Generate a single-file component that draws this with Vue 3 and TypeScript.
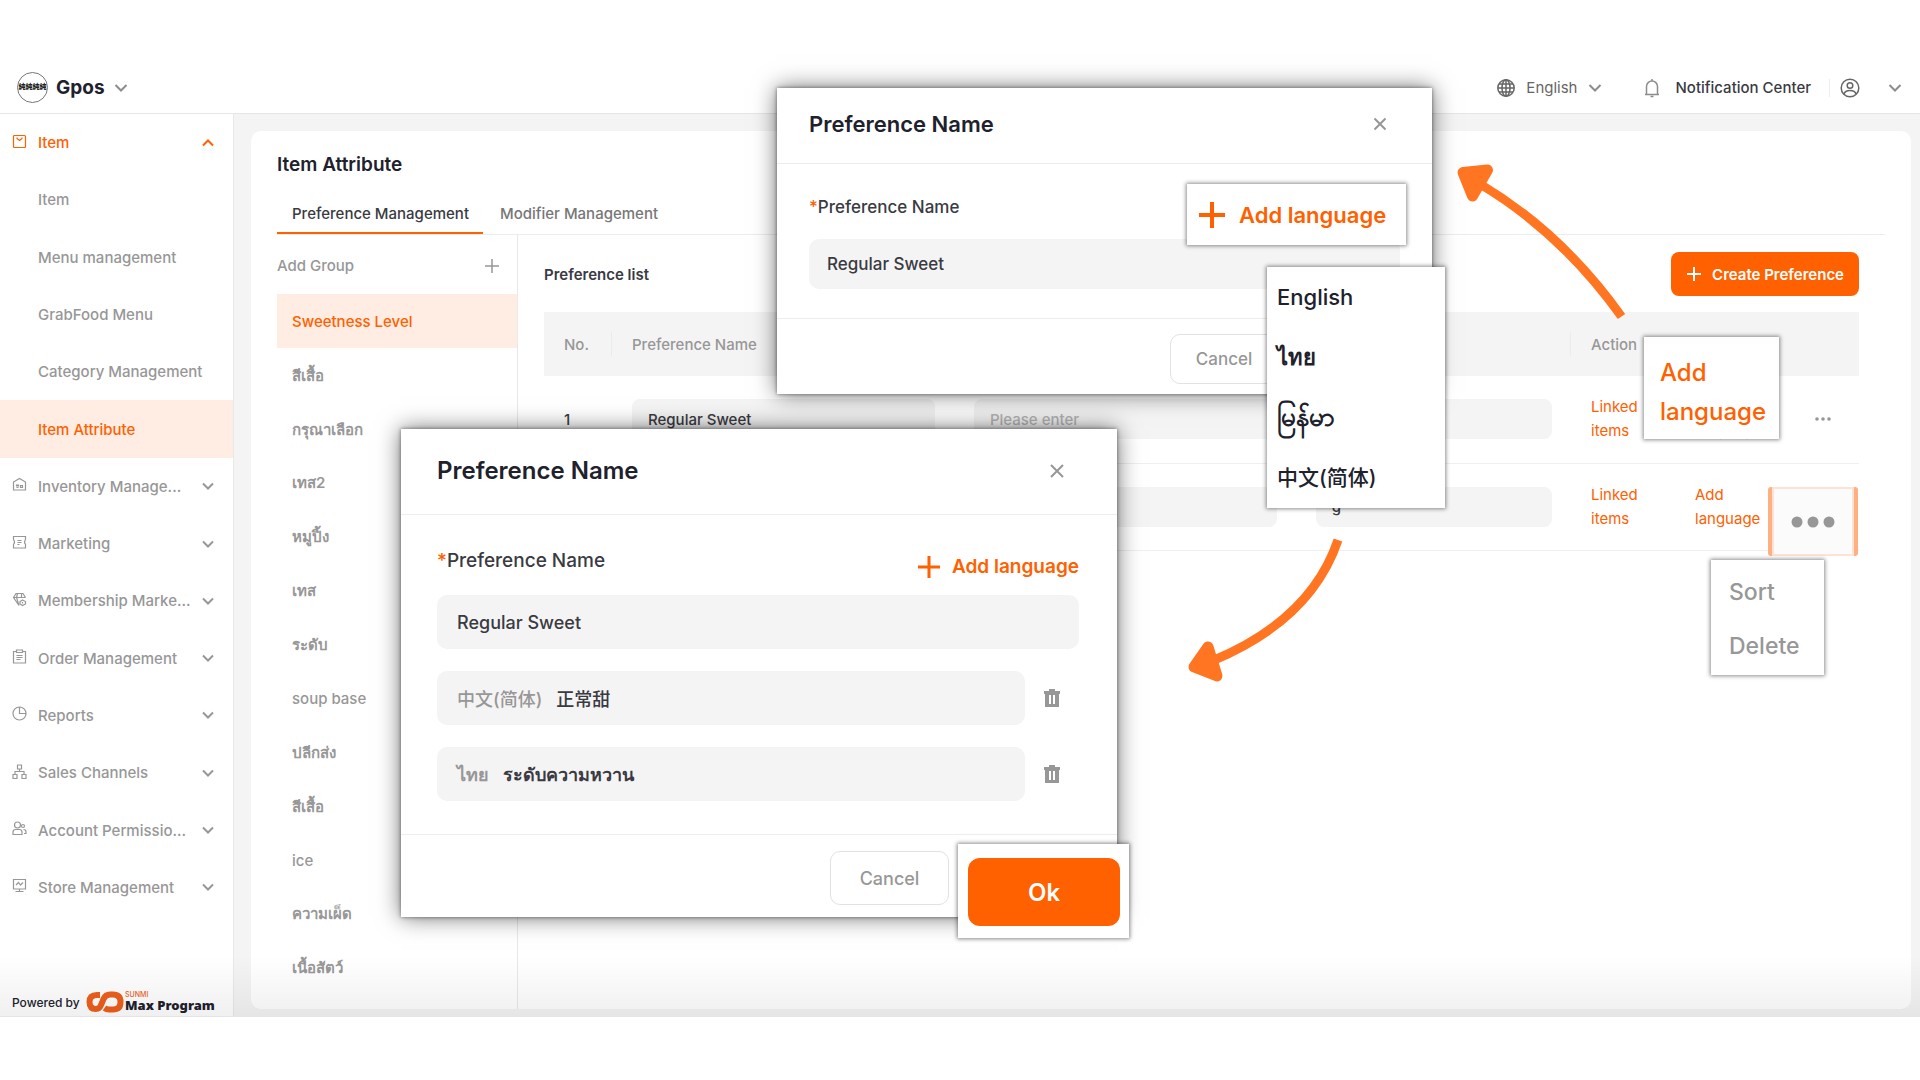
<script setup lang="ts">
import { ref } from 'vue'

interface MenuEntry {
  label: string
  icon?: string
  active?: boolean
}

interface PreferenceRow {
  no: number
  name: string
  second: string
  third: string
}

const submenu: MenuEntry[] = [
  { label: 'Item' },
  { label: 'Menu management' },
  { label: 'GrabFood Menu' },
  { label: 'Category Management' },
  { label: 'Item Attribute', active: true },
]

const sections: MenuEntry[] = [
  {
    label: 'Inventory Manage...',
    icon: 'M1.500 13V5L7.500 1.500L13.500 5V13ZM4.500 8H6.500V9H4.500ZM4.500 10.500H6.500M8.500 8.500H10.500V10.500H8.500Z',
  },
  {
    label: 'Marketing',
    icon: 'M1.500 1.500H13.500V4.500Q11.500 7 13.500 9.500V13H1.500V9.500Q3.500 7 1.500 4.500ZM5.500 5.500H9.500M5.500 7.500H9.500M5.500 9.500H7.500',
  },
  {
    label: 'Membership Marke...',
    icon: 'M7 13.500L1.500 5.500L4 1.500H11L13.500 5.500M1.500 5.500H13.500M5.500 1.500L4.500 5.500L7 13.500M9.500 1.500V5.500M10.500 8L13.500 9.500V12L10.500 13.500L8 12V9.500ZM10.500 10V11.500',
  },
  {
    label: 'Order Management',
    icon: 'M4.500 2.500H1.500V14H13.500V2.500H10.500M4.500 1H10.500V3.500H4.500ZM4.500 6.500H10.500M4.500 8.500H10.500M4.500 10.500H8.500',
  },
  { label: 'Reports', icon: 'M14 7.500A6.500 6.500 0 1 1 7.500 1A6.500 6.500 0 0 1 14 7.500ZM7.500 1V7.500H14' },
  {
    label: 'Sales Channels',
    icon: 'M5.500 1H9.500V5H5.500ZM1 10.500H5V14.500H1ZM10 10.500H14V14.500H10ZM7.500 5V7.500M3 10.500V7.500H12V10.500',
  },
  {
    label: 'Account Permissio...',
    icon: 'M8.500 4A3 3 0 1 1 2.500 4A3 3 0 1 1 8.500 4ZM1 13.500V11Q1 8.500 3.500 8.500H7.500Q10 8.500 10 11V13.500ZM11 3.500A1.500 1.500 0 1 1 11 6.500A1.500 1.500 0 1 1 11 3.500M11.500 8.500Q14 8.500 14 11V12.500H12',
  },
  {
    label: 'Store Management',
    icon: 'M1.500 1.500H13.500V11H1.500ZM4 7L6.500 4.500L8.500 7L11 4.500M7.500 11V13.500M3.500 13.500H11.500',
  },
]

const groups = [
  'Sweetness Level', 'สีเสื้อ', 'กรุณาเลือก', 'เทส2', 'หมูปิ้ง', 'เทส', 'ระดับ',
  'soup base', 'ปลีกส่ง', 'สีเสื้อ', 'ice', 'ความเผ็ด', 'เนื้อสัตว์',
]
const activeGroup = ref(0)
const isThai = (text: string) => /[\u0e00-\u0e7f]/.test(text)

const rows = ref<PreferenceRow[]>([
  { no: 1, name: 'Regular Sweet', second: '', third: '' },
  { no: 2, name: '', second: '', third: 'g' },
])

const languages = [
  { code: 'en', label: 'English' },
  { code: 'th', label: 'ไทย' },
  { code: 'my', label: 'မြန်မာ' },
  { code: 'zh', label: '中文(简体)' },
]
const preferenceName = ref('Regular Sweet')
const translations = ref([
  { id: 'zh', language: '中文(简体)', value: '正常甜' },
  { id: 'th', language: 'ไทย', value: 'ระดับความหวาน' },
])
</script>

<template>
  <div class="page">
    <header class="topbar">
      <button class="brand" type="button">
        <span class="brand-logo">純純純純</span>
        <span class="brand-name">Gpos</span>
        <svg class="chevron" width="14" height="10" viewBox="0 0 14 10"><path d="M1.500 2L7 7.500L12.500 2" /></svg>
      </button>
      <div class="tools">
        <button class="tool language" type="button">
          <svg class="line-icon dark" width="20" height="20" viewBox="0 0 20 20">
            <circle cx="10" cy="10" r="8.200" />
            <ellipse cx="10" cy="10" rx="4" ry="8.200" />
            <path d="M10 2V18M2 10H18M3 6H17M3 14H17" />
          </svg>
          <span>English</span>
          <svg class="chevron" width="14" height="10" viewBox="0 0 14 10"><path d="M1.500 2L7 7.500L12.500 2" /></svg>
        </button>
        <button class="tool notice" type="button">
          <svg class="line-icon" width="18" height="20" viewBox="0 0 18 20">
            <path d="M2 16.500H16M3.500 16.500V8.500A5.500 5.500 0 0 1 14.500 8.500V16.500M9 3V1M7.500 18.500H10.500" />
          </svg>
          <span>Notification Center</span>
        </button>
        <button class="tool account" type="button" aria-label="Account">
          <svg class="line-icon dark" width="20" height="20" viewBox="0 0 20 20">
            <circle cx="10" cy="10" r="8.800" />
            <circle cx="10" cy="7.500" r="2.800" />
            <path d="M4 16Q5 12.500 10 12.500Q15 12.500 16 16" />
          </svg>
          <svg class="chevron" width="14" height="10" viewBox="0 0 14 10"><path d="M1.500 2L7 7.500L12.500 2" /></svg>
        </button>
      </div>
    </header>

    <div class="body">
      <aside class="sidebar">
        <nav class="nav">
          <button class="nav-row open" type="button">
            <svg class="nav-icon" width="15" height="15" viewBox="0 0 15 15">
              <rect x="1.500" y="1.500" width="12" height="12" rx="1" />
              <path d="M5 3.500V4.500L7.500 6.500L10 4.500V3.500" />
            </svg>
            <span>Item</span>
            <svg class="nav-chevron" width="12" height="10" viewBox="0 0 12 10"><path d="M1 7.500L6 2.500L11 7.500" /></svg>
          </button>
          <a v-for="entry in submenu" :key="entry.label" class="nav-row sub" :class="{ active: entry.active }" href="#">{{ entry.label }}</a>
          <button v-for="entry in sections" :key="entry.label" class="nav-row" type="button">
            <svg class="nav-icon" width="15" height="15" viewBox="0 0 15 15"><path :d="entry.icon" /></svg>
            <span>{{ entry.label }}</span>
            <svg class="nav-chevron" width="12" height="10" viewBox="0 0 12 10"><path d="M1 2.500L6 7.500L11 2.500" /></svg>
          </button>
        </nav>
        <footer class="powered">
          <span class="powered-by">Powered by</span>
          <svg width="38" height="22" viewBox="0 0 38 22">
            <path d="M14 4H11Q3.500 4 3.500 11Q3.500 18 10 18Q13.500 18 15 14L17.500 8Q19.500 3.500 24 3.500H27Q34.500 3.500 34.500 11Q34.500 18.500 27 18.500H23Q20.500 18.500 18.500 17" />
          </svg>
          <span class="program">
            <span class="program-brand">SUNMI</span>
            <span class="program-name">Max Program</span>
          </span>
        </footer>
      </aside>

      <main class="main">
        <section class="card">
          <h1>Item Attribute</h1>
          <div class="tabs">
            <button class="tab selected" type="button">Preference Management</button>
            <button class="tab" type="button">Modifier Management</button>
          </div>
          <div class="split">
            <div class="groups">
              <button class="add-group" type="button">
                <span>Add Group</span>
                <svg width="14" height="14" viewBox="0 0 14 14"><path d="M7 0V14M0 7H14" /></svg>
              </button>
              <ul>
                <li v-for="(group, index) in groups" :key="index">
                  <button class="group" :class="{ active: index === activeGroup, thai: isThai(group) }" type="button" @click="activeGroup = index">{{ group }}</button>
                </li>
              </ul>
            </div>
            <div class="panel">
              <div class="toolbar">
                <h2>Preference list</h2>
                <button class="create" type="button">
                  <svg width="16" height="16" viewBox="0 0 16 16"><path d="M8 1V15M1 8H15" /></svg>
                  <span>Create Preference</span>
                </button>
              </div>
              <table>
                <colgroup>
                  <col class="c-no"><col class="c-name"><col class="c-name"><col><col class="c-action">
                </colgroup>
                <thead>
                  <tr>
                    <th>No.</th>
                    <th>Preference Name</th>
                    <th></th>
                    <th></th>
                    <th>Action</th>
                  </tr>
                </thead>
                <tbody>
                  <tr v-for="row in rows" :key="row.no">
                    <td>{{ row.no }}</td>
                    <td><input v-model="row.name" type="text" aria-label="Preference name"></td>
                    <td><input v-model="row.second" type="text" placeholder="Please enter" aria-label="Second name"></td>
                    <td><input v-model="row.third" type="text" aria-label="Third name"></td>
                    <td>
                      <div class="actions">
                        <a href="#">Linked items</a>
                        <a href="#">Add language</a>
                        <button class="more" type="button" aria-label="More">
                          <svg width="16" height="4" viewBox="0 0 16 4"><circle cx="2" cy="2" r="1.800" /><circle cx="8" cy="2" r="1.800" /><circle cx="14" cy="2" r="1.800" /></svg>
                        </button>
                      </div>
                    </td>
                  </tr>
                </tbody>
              </table>
            </div>
          </div>
        </section>
      </main>
    </div>

    <section class="dialog dialog-small" role="dialog" aria-labelledby="title-small">
      <header>
        <h2 id="title-small">Preference Name</h2>
        <button class="close" type="button" aria-label="Close">
          <svg width="14" height="14" viewBox="0 0 14 14"><path d="M1.500 1.500L12.500 12.500M12.500 1.500L1.500 12.500" /></svg>
        </button>
      </header>
      <div class="dialog-body">
        <label for="name-small"><span class="star">*</span>Preference Name</label>
        <div class="field"><input id="name-small" v-model="preferenceName" type="text"></div>
      </div>
      <footer><button class="cancel" type="button">Cancel</button></footer>
    </section>

    <button class="callout add-zoom" type="button">
      <svg width="26" height="26" viewBox="0 0 26 26"><path d="M13 0V26M0 13H26" /></svg>
      <span>Add language</span>
    </button>

    <ul class="callout language-menu">
      <li v-for="language in languages" :key="language.code">
        <button type="button" :class="language.code">{{ language.label }}</button>
      </li>
    </ul>

    <section class="dialog dialog-large" role="dialog" aria-labelledby="title-large">
      <header>
        <h2 id="title-large">Preference Name</h2>
        <button class="close" type="button" aria-label="Close">
          <svg width="14" height="14" viewBox="0 0 14 14"><path d="M1 1L13 13M13 1L1 13" /></svg>
        </button>
      </header>
      <div class="dialog-body">
        <div class="label-row">
          <label for="name-large"><span class="star">*</span>Preference Name</label>
          <button class="add-language" type="button">
            <svg width="22" height="22" viewBox="0 0 22 22"><path d="M11 0V22M0 11H22" /></svg>
            <span>Add language</span>
          </button>
        </div>
        <div class="field"><input id="name-large" v-model="preferenceName" type="text"></div>
        <div v-for="item in translations" :key="item.id" class="translation">
          <div class="field" :class="item.id">
            <label :for="item.id">{{ item.language }}</label>
            <input :id="item.id" v-model="item.value" type="text">
          </div>
          <button class="trash" type="button" aria-label="Remove">
            <svg width="18" height="20" viewBox="0 0 18 20"><path fill-rule="evenodd" d="M6 1H12V3H17V6H16V19H2V6H1V3H6ZM6 7V16H8V7ZM10 7V16H12V7Z" /></svg>
          </button>
        </div>
      </div>
      <footer><button class="cancel" type="button">Cancel</button></footer>
    </section>

    <div class="callout ok-zoom"><button type="button">Ok</button></div>
    <a class="callout action-zoom" href="#">Add language</a>
    <button class="more-zoom" type="button" aria-label="More">
      <svg width="44" height="12" viewBox="0 0 44 12"><circle cx="6" cy="6" r="5.500" /><circle cx="22" cy="6" r="5.500" /><circle cx="38" cy="6" r="5.500" /></svg>
    </button>
    <ul class="callout more-menu">
      <li><button type="button">Sort</button></li>
      <li><button type="button">Delete</button></li>
    </ul>

    <svg class="arrow arrow-up" width="180" height="170" viewBox="1450 155 180 170">
      <path class="shaft" d="M1621.500 316.500Q1562 233 1480 184" />
      <path class="head" d="M1463 172.500L1487.500 170L1472.500 196Z" />
    </svg>
    <svg class="arrow arrow-down" width="170" height="160" viewBox="1180 530 170 160">
      <path class="shaft" d="M1338 540Q1311 620 1212 661" />
      <path class="head" d="M1194 667L1208 647L1217 676Z" />
    </svg>
  </div>
</template>

<style>
body {
  background: #fff;
}
</style>

<style scoped>
.page {
  position: relative;
  box-sizing: border-box;
  min-height: 100vh;
  padding: 63px 0;
  overflow: hidden;
  background: #fff;
  color: #3a3a42;
  font-family: Inter, "Noto Sans", "Noto Sans CJK SC", sans-serif;
  font-size: 15px;
  font-weight: 500;
}
.page *,
.page *::after {
  box-sizing: border-box;
}
button,
input {
  border: 0;
  padding: 0;
  background: none;
  color: inherit;
  font: inherit;
  text-align: left;
}
button { cursor: pointer; }
input { outline: none; min-width: 0; }
a { color: inherit; text-decoration: none; }
h1, h2 { margin: 0; color: #20212c; font-weight: 600; }
ul { margin: 0; padding: 0; list-style: none; }
svg { flex: none; display: block; fill: none; stroke: currentColor; }

/* top bar */
.topbar {
  display: flex;
  justify-content: space-between;
  align-items: center;
  height: 51px;
  padding: 0 18px 1px 17px;
  border-bottom: 1px solid #e6e6e6;
}
.brand, .tool { display: flex; align-items: center; }
.brand-logo {
  width: 31px;
  height: 31px;
  margin-right: 8px;
  border: 1px solid #777;
  border-radius: 50%;
  overflow: hidden;
  font-size: 7px;
  font-weight: 900;
  line-height: 28px;
  text-align: center;
  white-space: nowrap;
  color: #222;
}
.brand-name { margin-right: 9px; color: #20212c; font-size: 19px; font-weight: 700; }
.chevron { color: #8c8c8c; stroke-width: 2; }
.line-icon { color: #8c8c8c; stroke-width: 1.500; }
.line-icon.dark { color: #666; }
.tools { display: flex; align-items: center; }
.language { gap: 10px; color: #666; font-weight: 400; }
.notice { gap: 15px; margin-left: 41px; }
.account {
  gap: 28px;
  height: 18px;
  margin-left: 18px;
  padding-left: 10px;
  border-left: 1px solid #eee;
}

/* sidebar */
.body { display: flex; border-bottom: 1px solid #e4e4e4; position: relative; }
.body::after {
  content: "";
  position: absolute;
  inset: auto 0 0 0;
  height: 60px;
  background: linear-gradient(transparent, rgba(0, 0, 0, 0.060));
  pointer-events: none;
}
.sidebar {
  display: flex;
  flex: none;
  flex-direction: column;
  justify-content: space-between;
  width: 234px;
  border-right: 1px solid #e8e8e8;
}
.nav { display: grid; grid-template-rows: repeat(14, 1fr); height: 802px; }
.nav-row {
  display: flex;
  align-items: center;
  gap: 11px;
  padding: 0 19px 0 12px;
  color: #979797;
  white-space: nowrap;
}
.nav-row.sub { padding-left: 38px; }
.nav-row.open { color: #ff6000; }
.nav-row.active { background: #ffede3; color: #ff6000; }
.nav-icon { margin-bottom: 3px; stroke-width: 1.200; }
.nav-chevron { margin-left: auto; stroke-width: 2; }
.powered {
  display: flex;
  align-items: center;
  height: 28px;
  padding-left: 12px;
  color: #20212c;
}
.powered-by { width: 74px; font-size: 12px; }
.powered svg { stroke: #ee5f1c; stroke-width: 6; }
.program { display: flex; flex-direction: column; margin-left: 1px; }
.program-brand { color: #ee5f1c; font-size: 7px; line-height: 7px; }
.program-name { font-size: 13px; font-weight: 900; line-height: 15px; font-family: "Noto Sans", sans-serif; white-space: nowrap; }

/* main card */
.main { flex: 1; min-width: 0; padding: 17px 9px 7px 17px; background: #f4f4f4; }
.card { height: 100%; padding: 22px 26px 0; border-radius: 10px; background: #fff; }
h1 { font-size: 19px; line-height: 24px; }
.tabs { display: flex; gap: 2px; margin-top: 17px; border-bottom: 1px solid #ececec; }
.tab { height: 40px; padding: 0 14px 0 15px; border-bottom: 2px solid transparent; color: #777; }
.tab.selected { border-color: #ff6000; color: #3a3a42; }
.split { display: flex; }
.groups { flex: none; width: 241px; padding-bottom: 15px; border-right: 1px solid #e8e8e8; }
.groups ul { display: grid; grid-template-rows: repeat(13, 1fr); height: 700px; }
.groups li { display: grid; }
.add-group {
  display: flex;
  align-items: center;
  justify-content: space-between;
  width: 100%;
  height: 59px;
  padding: 2px 18px 0 0;
  color: #979797;
}
.add-group svg { stroke-width: 1.500; }
.group { padding: 2px 15px 0; color: #979797; }
.group.active { background: #ffede3; color: #ff6000; }
.thai, .th { font-weight: 600; }
.panel { flex: 1; min-width: 0; padding: 17px 26px 0; }
.toolbar { display: flex; align-items: center; justify-content: space-between; margin-bottom: 16px; }
.toolbar h2 { color: #3a3a42; font-size: 15px; }
.create {
  display: flex;
  align-items: center;
  gap: 10px;
  height: 44px;
  padding: 0 15px;
  border-radius: 8px;
  background: #ff6000;
  color: #fff;
  font-weight: 600;
}
.create svg { stroke-width: 2; }
table { width: 100%; border-collapse: collapse; table-layout: fixed; }
.c-no { width: 68px; }
.c-name { width: 26%; }
.c-action { width: 288px; }
th, td { padding: 0 19px 0 20px; text-align: left; font-weight: 500; }
th { height: 64px; background: linear-gradient(#ebebeb, #ebebeb) right center / 1px 24px no-repeat #f4f4f4; color: #979797; }
th:last-child { background: #f4f4f4; }
td { height: 87px; border-bottom: 1px solid #efefef; }
td input {
  display: block;
  width: 100%;
  height: 40px;
  padding: 0 16px;
  border-radius: 8px;
  background: #f4f4f4;
}
input::placeholder { color: #b4b4b4; opacity: 1; }
.actions { display: flex; align-items: center; color: #ff6000; font-weight: 400; line-height: 24px; }
.actions a { width: 64px; margin-right: 40px; }
.more { margin-left: 16px; color: #979797; }
.more svg, .more-zoom svg, .trash svg { fill: currentColor; stroke: none; }

/* dialogs */
.dialog {
  position: absolute;
  display: flex;
  flex-direction: column;
  background: #fff;
  box-shadow: 0 0 4px rgba(0, 0, 0, 0.500), 0 0 22px rgba(0, 0, 0, 0.550);
}
.dialog header { display: flex; align-items: center; justify-content: space-between; border-bottom: 1px solid #ededed; }
.dialog footer { display: flex; justify-content: flex-end; border-top: 1px solid #ededed; }
.close { color: #979797; }
.close svg { stroke-width: 2; }
.star { color: #ff6000; }
.field { display: flex; align-items: center; border-radius: 10px; background: #f4f4f4; }
.field input { flex: 1; height: 100%; }
.cancel { border: 1px solid #e2e2e2; border-radius: 10px; color: #979797; text-align: center; }

.dialog-small { top: 88px; left: 777px; width: 655px; height: 306px; font-size: 17px; }
.dialog-small header { height: 76px; padding: 0 45px 4px 32px; }
.dialog-small h2 { font-size: 22px; }
.dialog-small .dialog-body { flex: 1; padding: 31px 32px 0; }
.dialog-small label { display: block; height: 44px; line-height: 24px; }
.dialog-small .field { height: 50px; padding: 0 18px; }
.dialog-small footer { height: 76px; padding: 15px 154px 0 0; }
.dialog-small .cancel { width: 108px; height: 50px; }

.dialog-large { top: 429px; left: 401px; width: 716px; height: 488px; font-size: 18px; }
.dialog-large header { height: 86px; padding: 0 53px 2px 36px; }
.dialog-large h2 { font-size: 24px; }
.dialog-large .dialog-body { flex: 1; padding: 32px 38px 0 36px; }
.label-row { display: flex; justify-content: space-between; height: 48px; font-size: 19px; line-height: 28px; }
.add-language { display: flex; align-items: center; gap: 12px; height: 40px; color: #ff6000; font-weight: 600; }
.add-language svg { stroke-width: 3; }
.dialog-large .field { flex: 1; gap: 14px; height: 54px; padding: 0 20px; }
.dialog-large .field label { color: #979797; }
.translation { display: flex; align-items: center; gap: 18px; margin-top: 22px; padding-right: 18px; }
.trash { color: #979797; }
.dialog-large footer { height: 83px; padding: 16px 168px 0 0; }
.dialog-large .cancel { width: 119px; height: 54px; }

/* magnified callouts */
.callout { position: absolute; background: #fff; box-shadow: 0 0 4px 1px rgba(0, 0, 0, 0.450); }
.add-zoom {
  top: 184px;
  left: 1187px;
  display: flex;
  align-items: center;
  gap: 14px;
  width: 219px;
  height: 61px;
  padding-left: 12px;
  color: #ff6000;
  font-size: 22px;
  font-weight: 600;
}
.add-zoom svg { stroke-width: 4; }
.language-menu { top: 267px; left: 1267px; width: 178px; height: 241px; color: #20212c; font-size: 22px; }
.language-menu li { height: 60px; }
.language-menu button { display: block; width: 100%; height: 60px; padding-left: 10px; line-height: 60px; white-space: nowrap; }
.language-menu .my { font-size: 26px; font-weight: 600; }
.language-menu .zh { font-size: 21px; line-height: 62px; }
.ok-zoom { top: 844px; left: 958px; width: 171px; height: 94px; padding: 14px 9px 12px 10px; }
.ok-zoom button {
  width: 100%;
  height: 68px;
  border-radius: 12px;
  background: #ff6000;
  color: #fff;
  font-size: 24px;
  font-weight: 600;
  text-align: center;
}
.action-zoom {
  top: 337px;
  left: 1644px;
  width: 135px;
  height: 102px;
  padding: 16px 14px 0 16px;
  color: #ff6000;
  font-size: 24px;
  line-height: 39px;
}
.more-zoom {
  position: absolute;
  top: 487px;
  left: 1768px;
  display: flex;
  align-items: center;
  justify-content: center;
  width: 90px;
  height: 69px;
  border: solid #ffb083;
  border-width: 0 4px;
  border-radius: 3px;
  background: #fbfbfb;
  box-shadow: inset 0 0 0 2px #fde3d4;
  color: #979797;
}
.more-menu { top: 560px; left: 1711px; width: 113px; height: 115px; padding: 5px 0 0 18px; color: #979797; font-size: 23px; }
.more-menu button { display: block; height: 54px; line-height: 54px; }

.arrow { position: absolute; color: #ff7522; pointer-events: none; }
.arrow-up { top: 155px; left: 1450px; }
.arrow-down { top: 530px; left: 1180px; }
.shaft { stroke-width: 9; }
.head { fill: currentColor; stroke-width: 11; stroke-linejoin: round; }
</style>
